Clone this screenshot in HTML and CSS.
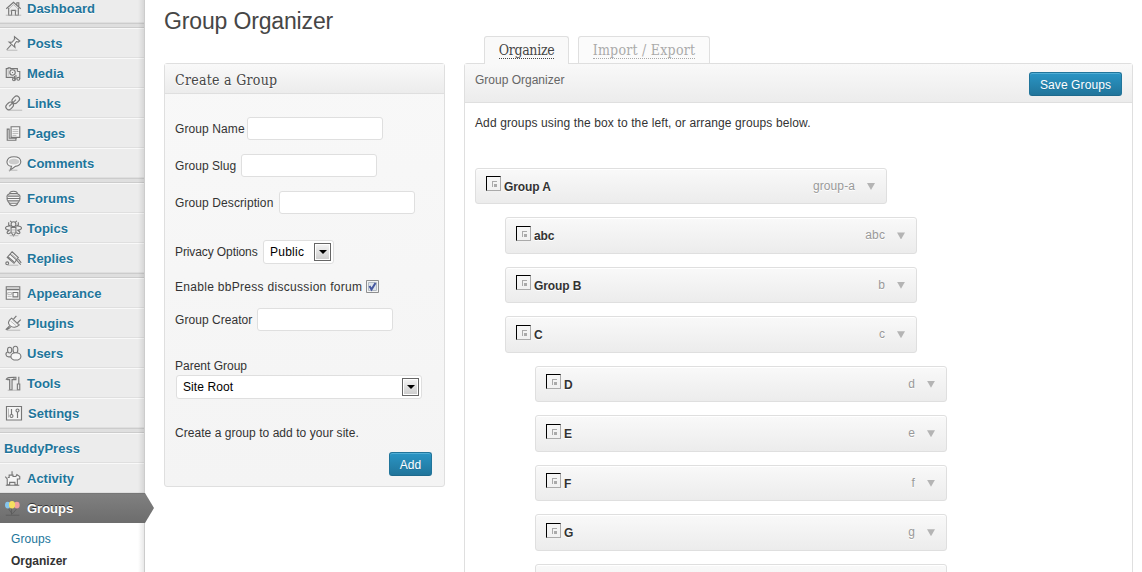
FILE: index.html
```
<!DOCTYPE html>
<html lang="en">
<head>
<meta charset="utf-8">
<title>Group Organizer</title>
<link rel="stylesheet" href="styles.css">
</head>
<body>
<div class="admin">
<nav class="menu">
  <a class="item first"><svg class="icon" viewBox="0 0 28 30"><path d="M6.500 15.800L14 9l7.500 6.800M9 15v7.500h3v-5h4v5h3V15M17.500 11.500V9.500h2v4"/><path class="fine" d="M9.500 15.500L14 11.500l4.500 4M10 18h2m4 0h2.500M6 22.500h16"/></svg>Dashboard</a>
  <div class="gap"></div>
  <a class="item"><svg class="icon" viewBox="0 0 28 30"><path class="solid" d="M15 8.500l5.500 4.500-1.500 1-2-.5-2 3 .5 3-6-5.500 3 .2 2.500-3z"/><path d="M11.500 17L7 22"/><path class="fine" d="M7 22.500h11M13 14l3-3"/></svg>Posts</a>
  <a class="item"><svg class="icon" viewBox="0 0 28 30"><path d="M14 19.500H6.500v-9h2v-1h2v1h7.500v3M15 22v-4"/><circle cx="13" cy="14.500" r="2.800"/><path d="M12.500 14.500h1M16.500 21.500V17M20.500 21V13.500H18"/><circle cx="14.500" cy="21.500" r="1.500"/><circle cx="19" cy="21" r="1.500"/><path class="fine" d="M8.500 12v6"/></svg>Media</a>
  <a class="item"><svg class="icon" viewBox="0 0 28 30"><g transform="rotate(-45 13 15)"><rect x="4.500" y="12" width="8.500" height="6" rx="3"/><rect x="13.500" y="12" width="8.500" height="6" rx="3"/><path d="M8 15h10"/></g><path class="fine" d="M8 22.500h15"/></svg>Links</a>
  <a class="item"><svg class="icon" viewBox="0 0 28 30"><path class="solid" d="M11.500 8.500h9v11h-9z"/><path d="M10 11H7.500v11.500h9V21M9.500 11v9.500h8"/><path class="fine" d="M13 11.500h6M13 13.500h6M13 15.500h6M13 17.500h4"/></svg>Pages</a>
  <a class="item"><svg class="icon" viewBox="0 0 28 30"><path class="solid" d="M12 18.500c-7-.3-6.500-10 2.500-10s9.300 9.500 1.500 10l-5.500 4z"/><path class="soft" d="M9 13.500c0-4 11-4 11 0s-11 4-11 0z"/><path class="fine" d="M9 22.500h9"/></svg>Comments</a>
  <div class="gap"></div>
  <a class="item"><svg class="icon" viewBox="0 0 28 30"><path class="solid" d="M14 8c3 0 4 1.500 4 2.500 3 1 3 3 2.500 4.500 1 3-1 4-2 5-.5 2-2 3-4.500 3s-4-1-4.500-3c-1-1-3-2-2-5-.5-1.500-.5-3.500 2.500-4.500 0-1 1-2.500 4-2.500z"/><path d="M10 10.500h8M8 13h12M7 15.500h14M8 18h12M9.500 20.500h9"/></svg>Forums</a>
  <a class="item"><svg class="icon" viewBox="0 0 28 30"><circle cx="14" cy="11" r="2.500"/><path d="M12 9L10.500 7.500M16 9l1.500-1.500M9 9v3l3 1.500M19 9v3l-3 1.500M11.500 13C3 12 5 18 10 17M16.500 13c8.500-1 6.500 5 1.500 4M10 17c-5 3-2 5 1 3M18 17c5 3 2 5-1 3M11.500 14.500h5v5L14 23l-2.500-3.500z"/><path class="fine" d="M12 17h4M12 19.500h4M10 23h9"/></svg>Topics</a>
  <a class="item"><svg class="icon" viewBox="0 0 28 30"><path class="solid" d="M12.500 8.500l6.500 6-4.500 6-7-6z"/><path d="M10.500 11l6.500 6M8.500 14l6 5M17 17l4.500 5M19 16l3 4"/><circle cx="7.500" cy="20.500" r="1.500"/><path class="fine" d="M12 11l6 5M8 22.500h11"/></svg>Replies</a>
  <div class="gap"></div>
  <a class="item"><svg class="icon" viewBox="0 0 28 30"><path class="solid" d="M6.500 8.500h14v13h-14z"/><path d="M7 11.500h13M13.500 14.500h5v4.500h-5z"/><path class="fine" d="M7 10h13M8 14.500h4v2H8zM8 18.500h4"/></svg>Appearance</a>
  <a class="item"><svg class="icon" viewBox="0 0 28 30"><path class="solid" d="M12 10l8 7c-3 3-7 3-9.500 1S8 13 12 10z"/><path d="M14 11l3-3.500M18 15l3.500-3.500M10 18l-4 4M11 19.500L7 22"/><path class="fine" d="M11 13l6 5M13 12l6 5M7 22.500h14"/></svg>Plugins</a>
  <a class="item"><svg class="icon" viewBox="0 0 28 30"><ellipse cx="10" cy="12" rx="2.200" ry="3"/><ellipse cx="16" cy="11.500" rx="2.500" ry="3.500"/><path d="M8 14c-3 1-2 5 1 5h3"/><ellipse class="solid" cx="16.500" cy="18.500" rx="5.200" ry="3.800"/></svg>Users</a>
  <a class="item"><svg class="icon" viewBox="0 0 28 30"><path d="M6.500 11c1-2 3-2 8-2v2.500h-2V22h-2.500V11.500H8zM15 9h1.500v2.500H15M19.500 8.500v7M18 16h2.500v6H18z"/><path class="fine" d="M8 22.500h13M11.500 12v9"/></svg>Tools</a>
  <a class="item settings"><svg class="icon" viewBox="0 0 28 30"><path class="solid" d="M6.500 8.500h15v13.500h-15z"/><path d="M11.500 11v6M17.500 14v6"/><circle cx="11.500" cy="18" r="1.500"/><circle cx="17.500" cy="12.500" r="1.500"/><path class="fine" d="M8.500 10.500v9"/></svg>Settings</a>
  <div class="gap"></div>
  <a class="item plain">BuddyPress</a>
  <a class="item"><svg class="icon" viewBox="0 0 28 30"><path class="solid" d="M5.500 13.500l2 2.500v6h2.500v-2.500h5.500V22h2.500v-6h2.500v-2.500l-3-2-1 2h-3V12h-4v2.500H8"/><path d="M12.500 8v4M6 22.500h14"/></svg>Activity</a>
  <a class="item current"><svg class="icon" viewBox="0 0 28 30"><path class="string" d="M9 16l3.500 5M12 15v7M18 15l-5 6M6 22.500h14"/><ellipse cx="8" cy="12" rx="2.800" ry="3.500" fill="#86c5ed"/><ellipse cx="17.500" cy="12" rx="2.900" ry="3.500" fill="#f2a0a0"/><ellipse cx="12.500" cy="11.700" rx="3.200" ry="3.900" fill="#f5e060"/></svg>Groups</a>
  <div class="submenu"><a>Groups</a><a class="on">Organizer</a></div>
</nav>
<main class="content">
  <h1>Group Organizer</h1>
  <div class="columns">
    <section class="create">
      <h2>Create a Group</h2>
      <form>
        <div class="row"><label class="w-name">Group Name</label><input class="field"></div>
        <div class="row"><label class="w-slug">Group Slug</label><input class="field"></div>
        <div class="row"><label class="w-desc">Group Description</label><input class="field"></div>
        <div class="row privacy"><label class="w-privacy">Privacy Options</label><div class="select short"><span>Public</span><i class="drop"></i></div></div>
        <div class="row forum"><label class="w-forum">Enable bbPress discussion forum</label><svg class="check" viewBox="0 0 13 13"><path class="frame" d="M.5.5h12v12H.5z"/><path class="inner" d="M2.500 2.500h8v8h-8z"/><path class="tick" d="M3.500 6l2 3.500L9.500 3"/></svg></div>
        <div class="row creator"><label class="w-creator">Group Creator</label><input class="field"></div>
        <div class="parent"><label>Parent Group</label><div class="select long"><span>Site Root</span><i class="drop"></i></div></div>
        <p class="hint">Create a group to add to your site.</p>
        <button class="button add" type="button">Add</button>
      </form>
    </section>
    <section class="organize">
      <div class="tabs"><a class="tab active"><span>Organize</span></a><a class="tab"><span>Import / Export</span></a></div>
      <div class="panel">
        <header><span>Group Organizer</span><button class="button save">Save Groups</button></header>
        <p class="intro">Add groups using the box to the left, or arrange groups below.</p>
        <div class="groups">
          <div class="group"><i class="avatar"></i><b>Group A</b><span>group-a</span><i class="arrow"></i></div>
          <div class="group d1"><i class="avatar"></i><b>abc</b><span>abc</span><i class="arrow"></i></div>
          <div class="group d1"><i class="avatar"></i><b>Group B</b><span>b</span><i class="arrow"></i></div>
          <div class="group d1"><i class="avatar"></i><b>C</b><span>c</span><i class="arrow"></i></div>
          <div class="group d2"><i class="avatar"></i><b>D</b><span>d</span><i class="arrow"></i></div>
          <div class="group d2"><i class="avatar"></i><b>E</b><span>e</span><i class="arrow"></i></div>
          <div class="group d2"><i class="avatar"></i><b>F</b><span>f</span><i class="arrow"></i></div>
          <div class="group d2"><i class="avatar"></i><b>G</b><span>g</span><i class="arrow"></i></div>
          <div class="group d2"></div>
        </div>
      </div>
    </section>
  </div>
</main>
</div>
</body>
</html>
```

FILE: styles.css
```
*, *::before, *::after { box-sizing: border-box; }
body { margin: 0; background: #fff; color: #333; font: 12px/18px "Liberation Sans", Arial, sans-serif; overflow: hidden; }
.admin { display: flex; height: 572px; overflow: hidden; }

.menu { position: relative; flex: 0 0 145px; min-width: 0; height: 572px; background: #ececec; border-right: 1px solid #ccc; }
.menu::after { content: ""; position: absolute; top: 0; right: 0; width: 6px; height: 572px; background: linear-gradient(to right, rgba(0,0,0,0), rgba(0,0,0,.09)); }
.item { display: flex; align-items: center; height: 30px; border-top: 1px solid #f9f9f9; border-bottom: 1px solid #dfdfdf; color: #21759b; font-weight: bold; font-size: 13px; line-height: 18px; padding-top: 1px; text-shadow: 0 1px 0 #fff; }
.first { margin-top: -7px; }
.plain { padding-left: 4px; }
.icon { width: 27px; height: 30px; margin: -2px 0 -1px; flex: none; fill: none; stroke: #777; stroke-width: 1.15; }
.settings .icon { width: 28px; }
.icon .fine { stroke: #aaa; stroke-width: .8; }
.icon .solid { fill: #f6f6f6; }
.icon .soft { fill: #ccc; stroke: none; }
.icon .string { stroke: #555; stroke-width: .7; }
.icon ellipse[fill] { stroke: none; }
.gap { height: 5px; background: #dfdfdf; border-top: 1px solid #ccc; border-bottom: 1px solid #ccc; }
.current { position: relative; z-index: 2; margin-right: -1px; background: linear-gradient(#808080, #6d6d6d); border-top-color: #777; border-bottom-color: #6d6d6d; color: #fff; text-shadow: 0 -1px 0 #333; }
.current::after { content: ""; position: absolute; left: 100%; top: -1px; width: 9px; height: 30px; background: linear-gradient(#808080, #6d6d6d); clip-path: polygon(0 0, 100% 50%, 0 100%); }
.submenu { display: flex; flex-direction: column; height: 60px; padding: 5px 0 0 11px; background: #fff; color: #21759b; }
.submenu a { height: 22px; line-height: 22px; letter-spacing: .1px; }
.submenu .on { color: #333; font-weight: bold; letter-spacing: 0; }

.content { flex: 1; min-width: 0; padding-left: 19px; }
h1 { margin: 0; height: 36px; padding-top: 7px; color: #464646; font-size: 23px; line-height: 29px; font-weight: normal; letter-spacing: -.15px; }
.columns { display: flex; gap: 19px; }
.create { flex: none; width: 281px; height: 424px; margin-top: 27px; border: 1px solid #dfdfdf; border-radius: 3px; background: linear-gradient(#f8f8f8, #f4f4f4); }
h2 { margin: 0; height: 30px; padding: 0 10px; border-bottom: 1px solid #dfdfdf; background: linear-gradient(#f9f9f9, #ececec); color: #464646; font: 14px/32px "DejaVu Serif Condensed", "DejaVu Serif", serif; font-stretch: condensed; letter-spacing: .28px; text-shadow: 0 1px 0 #fff; }
form { display: flex; flex-direction: column; padding: 23px 10px 0; letter-spacing: .05px; }
.row { display: flex; align-items: center; height: 23px; margin-bottom: 14px; }
.row label { flex: none; white-space: nowrap; }
.w-name { width: 72px; letter-spacing: .1px; }
.w-slug { width: 66px; }
.w-desc { width: 104px; letter-spacing: .1px; }
.row .w-privacy { width: 88px; letter-spacing: -.1px; }
.row .w-forum { width: 191px; letter-spacing: .3px; }
.w-creator { width: 82px; }
.field { width: 136px; height: 23px; margin: 0; padding: 3px; border: 1px solid #dfdfdf; border-radius: 3px; background: #fff; }
.privacy { height: 24px; margin: 12px 0 13px; }
.forum { height: 19px; margin-bottom: 12px; }
.creator { margin-bottom: 26px; }
.select { display: flex; align-items: center; justify-content: space-between; height: 24px; padding: 0 2px 0 6px; border: 1px solid #dfdfdf; border-radius: 3px; background: #fff; color: #000; }
.short { width: 71px; letter-spacing: .25px; }
.long { width: 246px; margin-left: 1px; letter-spacing: .1px; }
.drop { display: flex; align-items: center; justify-content: center; width: 17px; height: 18px; border: 1px solid #666; background: linear-gradient(#f5f5f5, #ccc); box-shadow: inset 0 0 0 1px #fff; }
.drop::after { content: ""; border: solid transparent; border-width: 4px 4px 0; border-top-color: #000; }
.check { width: 13px; height: 13px; fill: none; }
.frame { fill: #f4f4f4; stroke: #8e8f8f; }
.inner { fill: #dfe5eb; stroke: #b4bcc4; }
.tick { stroke: #4658a0; stroke-width: 2; }
.parent label { display: block; line-height: 18px; letter-spacing: 0; }
.hint { margin: 25px 0 10px; }
.button { height: 24px; padding: 1px 0 0; border: 1px solid #21759b; border-bottom-color: #1e6a8d; border-radius: 3px; background: linear-gradient(#2a95c5, #21759b); box-shadow: inset 0 1px 0 rgba(120,200,230,.5); color: #fff; font: 12px/20px "Liberation Sans", Arial, sans-serif; letter-spacing: .1px; text-shadow: 0 1px 0 rgba(0,0,0,.1); }
.add { width: 43px; margin-left: 214px; }
.save { width: 93px; }

.organize { flex: none; width: 669px; }
.tabs { position: relative; z-index: 1; display: flex; gap: 9px; height: 28px; margin-bottom: -1px; padding-left: 20px; }
.tab { width: 132px; height: 27px; padding-top: 4px; border: 1px solid #dfdfdf; border-bottom: 0; border-radius: 3px 3px 0 0; background: #fbfbfb; color: #aaa; text-align: center; font: 14px/18px "DejaVu Serif Condensed", "DejaVu Serif", serif; font-stretch: condensed; letter-spacing: .25px; }
.tab span { display: inline-block; height: 18px; border-bottom: 1px dotted #aaa; }
.tab.active { width: 85px; height: 28px; background: #f9f9f9; color: #464646; letter-spacing: -.3px; }
.active span { border-color: #464646; }
.panel { height: 540px; border: 1px solid #dfdfdf; border-radius: 3px 3px 0 0; }
.panel header { display: flex; align-items: center; justify-content: space-between; height: 39px; padding: 2px 10px 0; border-bottom: 1px solid #dfdfdf; background: linear-gradient(#f9f9f9, #ececec); color: #666; }
.panel header span { height: 26px; line-height: 18px; letter-spacing: 0; }
.intro { margin: 11px 0 0 10px; letter-spacing: .12px; }
.groups { display: flex; flex-direction: column; gap: 13.100px; margin: 35.900px 0 0 10px; }
.group { display: flex; width: 412px; height: 36.400px; flex: none; padding: 8px 11px 0 10px; border: 1px solid #dfdfdf; border-radius: 3px; background: linear-gradient(#f9f9f9, #ececec); box-shadow: inset 0 1px 0 #fff; text-shadow: 0 1px 0 #fff; }
.d1 { margin-left: 30px; }
.d2 { margin-left: 60px; }
.avatar { position: relative; width: 15px; height: 15px; margin: -.5px 3px 0 0; border: 1px solid; border-color: #000 #aaa #aaa #000; }
.avatar::before { content: ""; position: absolute; left: 5px; top: 4px; width: 5px; height: 6px; border: solid #aaa; border-width: 1px 0 0 1px; }
.avatar::after { content: ""; position: absolute; left: 7px; top: 7px; width: 3px; height: 3px; background: #aaa; }
.group b { flex: 1; padding-top: 1px; letter-spacing: -.1px; }
.group span { color: #999; letter-spacing: .1px; }
.arrow { width: 8px; height: 7px; margin: 6px 0 0 12px; background: #b4b4b4; clip-path: polygon(0 0, 100% 0, 50% 100%); }
```
